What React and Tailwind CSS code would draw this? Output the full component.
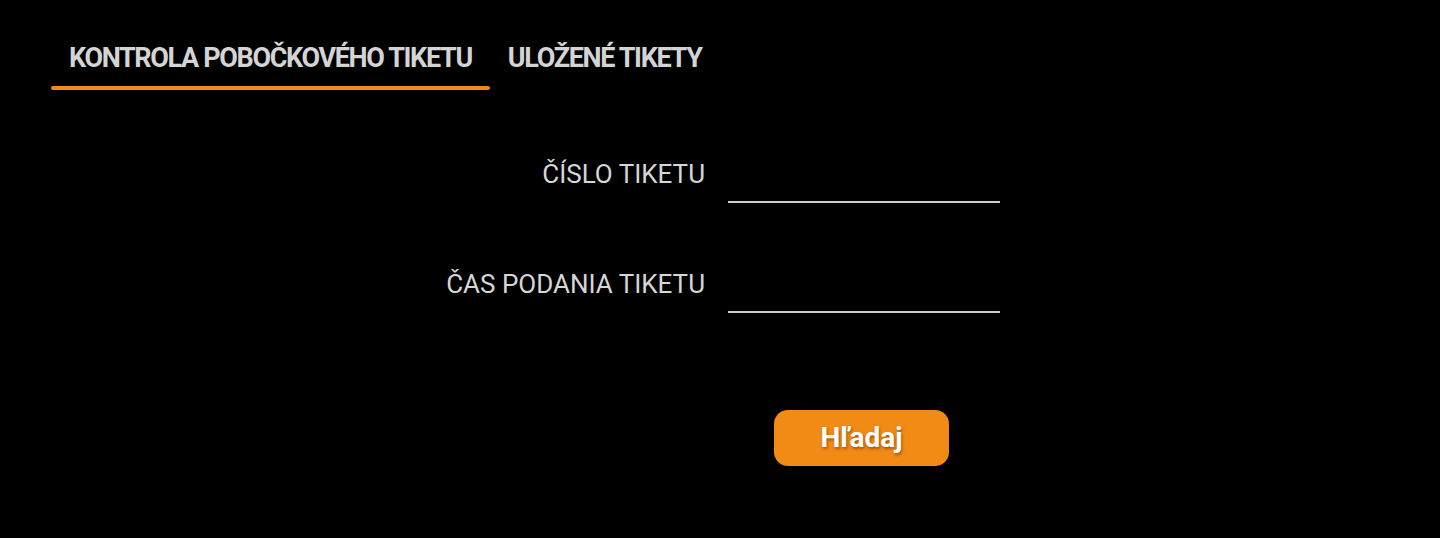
import React, { useState } from 'react';

const tabs = ['KONTROLA POBOČKOVÉHO TIKETU', 'ULOŽENÉ TIKETY'];

const Field = ({ label }) => (
  <div className="flex items-end gap-[23px]">
    <label className="w-[400px] text-right text-[26px] leading-none text-[#d6d6d6] pb-[16px]">
      {label}
    </label>
    <input
      type="text"
      className="w-[272px] h-[40px] bg-transparent border-b-2 border-[#cfcfcf] outline-none text-white text-[20px]"
    />
  </div>
);

const App = () => {
  const [active, setActive] = useState(0);

  return (
    <div className="min-h-[538px] w-full bg-black font-['Roboto',sans-serif]">
      {/* Tabs */}
      <div className="flex pl-[51px] pt-[38px]">
        {tabs.map((tab, i) => (
          <button
            key={tab}
            onClick={() => setActive(i)}
            className="relative px-[18px] pb-[10px] text-[27px] leading-[40px] font-bold text-[#d4d4d4] tracking-[-1.35px]"
          >
            {tab}
            {active === i && (
              <span className="absolute left-0 right-0 bottom-[-2px] h-[4px] rounded-full bg-[#f28a16]" />
            )}
          </button>
        ))}
      </div>

      {/* Form */}
      <div className="flex flex-col pl-[305px] pt-[73px] gap-[68px]">
        <Field label="ČÍSLO TIKETU" />
        <Field label="ČAS PODANIA TIKETU" />
      </div>

      <div className="flex pl-[774px] pt-[97px]">
        <button className="w-[175px] h-[56px] rounded-[14px] bg-[#f28a16] text-white text-[28px] font-bold [text-shadow:1px_2px_3px_rgba(120,50,0,0.6)]">
          Hľadaj
        </button>
      </div>
    </div>
  );
};

export default App;
